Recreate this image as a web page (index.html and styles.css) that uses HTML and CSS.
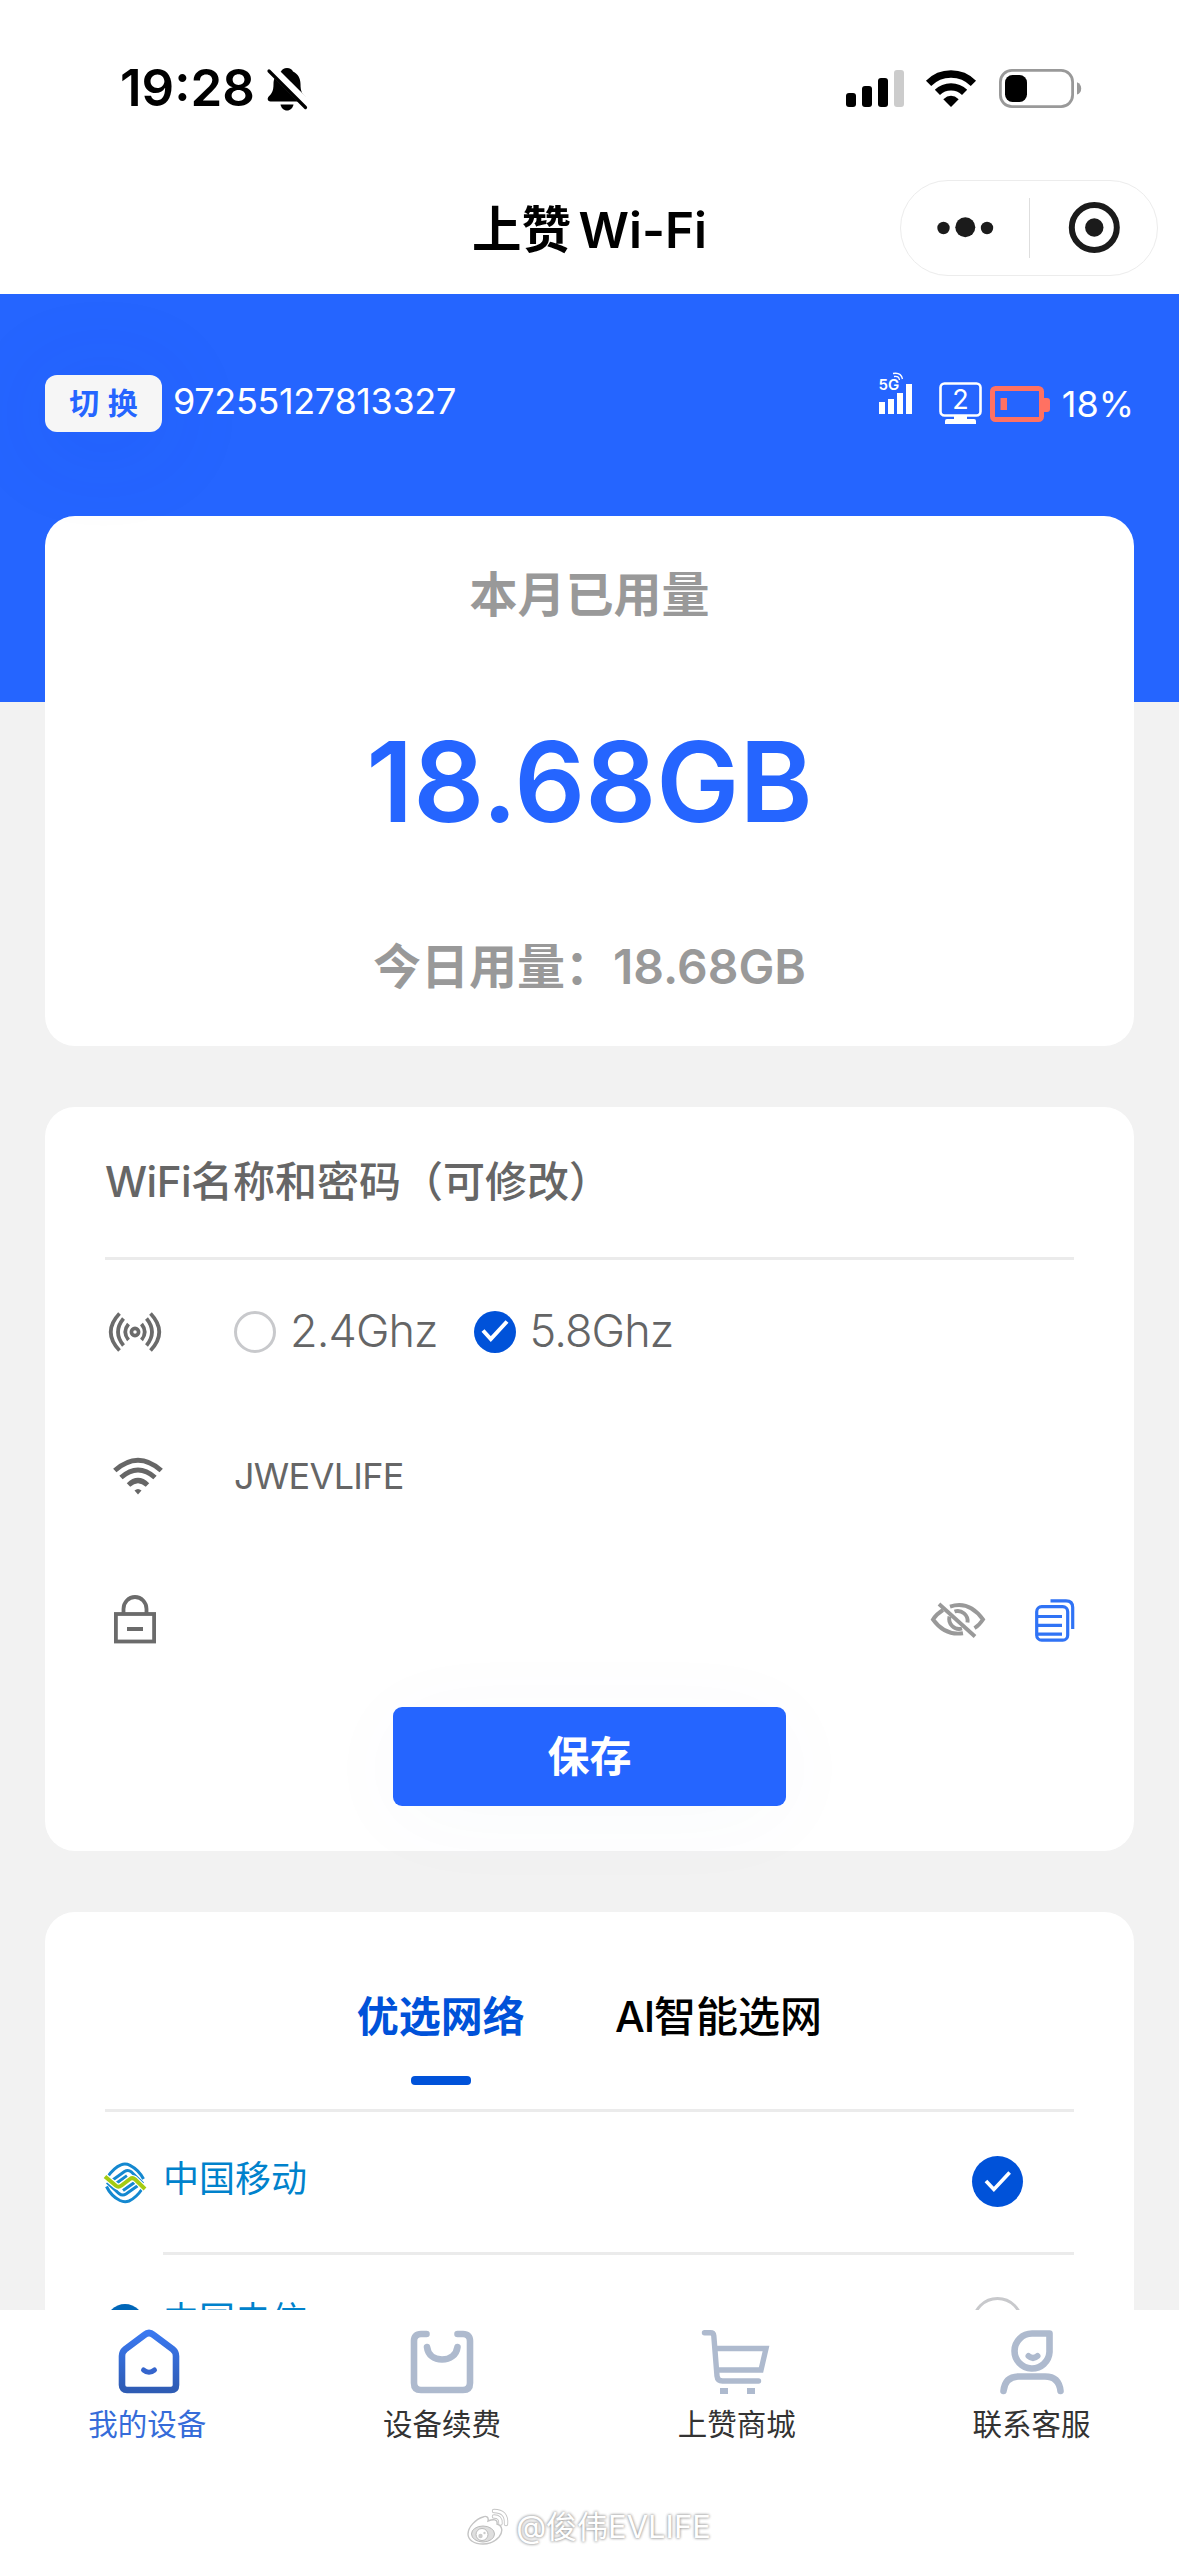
FILE: index.html
```html
<!DOCTYPE html>
<html lang="zh-CN">
<head>
<meta charset="utf-8">
<title>上赞 Wi-Fi</title>
<link rel="stylesheet" href="styles.css">
</head>
<body>
<div class="page">
  <header class="status">
    <div class="status-left">
      <span class="clock">19:28</span>
      <svg class="bell" width="40" height="44" viewBox="0 0 40 44">
        <path d="M20 1c3 0 5 1.600 6 3.400 5 2.300 7.500 7 7.500 12.600 0 8 2 10 4.500 12.500 1.600 1.700 1.500 5-1.500 5h-33c-3 0-3.500-3.300-1.800-5C4.500 26.700 6.500 24.500 6.500 17 6.500 11.400 9 6.700 14 4.400 15 2.600 17 1 20 1z"/>
        <path d="M13.500 37.500h13c-.6 3.400-3.200 6-6.500 6s-5.900-2.600-6.500-6z"/>
        <path d="M3.500 1L41 38.200" stroke="#fff" stroke-width="9"/>
        <path d="M2 4L38.500 40.500" stroke="#000" stroke-width="3.200" stroke-linecap="round"/>
      </svg>
    </div>
    <div class="status-right">
      <svg width="58" height="37" viewBox="0 0 58 37"><rect y="23" width="10" height="14" rx="3"/><rect x="16" y="16" width="10" height="21" rx="3"/><rect x="32" y="8" width="10" height="29" rx="3"/><rect x="48" width="10" height="37" rx="3" fill="#ccc"/></svg>
      <svg class="sys-wifi" width="50" height="37" viewBox="0 0 50 37"><g fill="none" stroke="#000" stroke-width="7.400"><path d="M2.600 13.300A31.500 31.500 0 0 1 47.400 13.300"/><path d="M11.400 22.400A19.500 19.500 0 0 1 38.600 22.400"/></g><path d="M17.300 29.200Q25 22.500 32.700 29.200L25 37Z"/></svg>
      <svg class="sys-battery" width="83" height="39" viewBox="0 0 83 39"><rect x="1.400" y="1.400" width="72.200" height="36.200" rx="11.500" fill="none" stroke="#999" stroke-width="2.800"/><rect x="6" y="6" width="22" height="27" rx="7.500"/><path d="M78 13.200q4.200 1.800 4.200 6.200t-4.200 6.200z" fill="#999"/></svg>
    </div>
  </header>
  <nav class="nav">
    <h1 class="nav-title">上赞 Wi-Fi</h1>
    <div class="capsule">
      <svg class="capsule-half" width="128" height="94" viewBox="0 0 128 94"><circle cx="42.500" cy="47" r="6.200"/><circle cx="64.300" cy="46.300" r="10"/><circle cx="86" cy="47" r="6.200"/></svg>
      <span class="capsule-line"></span>
      <svg class="capsule-half" width="127" height="94" viewBox="0 0 127 94"><circle cx="64.300" cy="46.500" r="22.500" fill="none" stroke="#1b1b1b" stroke-width="6"/><circle cx="64.300" cy="46.500" r="9.200"/></svg>
    </div>
  </nav>

  <main class="content">
    <section class="device">
      <button class="switch">切 换</button>
      <span class="device-id">97255127813327</span>
      <div class="device-state">
        <svg class="net" width="34" height="43" viewBox="0 0 34 43"><g fill="#fff"><rect y="30" width="6" height="12"/><rect x="9" y="27" width="6" height="15"/><rect x="18" y="21" width="6" height="21"/><rect x="27" y="12" width="6" height="30"/><text class="net-text" x="-0.500" y="18">5G</text></g><g fill="none" stroke="#fff" stroke-width="1.300"><path d="M14 1.500Q22 0 23.500 7"/><path d="M15 4.500Q20 3.500 20.500 8"/></g></svg>
        <svg class="monitor" width="44" height="43" viewBox="0 0 44 43"><rect x="1.500" y="1.500" width="40" height="32" rx="4" fill="none" stroke="#fff" stroke-width="2.600"/><path d="M15 34h13v3h7q2 0 2 2v3H6v-3q0-2 2-2h7z" fill="#fff"/><text class="monitor-text" x="21.500" y="26.500" text-anchor="middle" fill="#fff">2</text></svg>
        <svg class="cell" width="60" height="36" viewBox="0 0 60 36"><rect x="2.500" y="2.500" width="49" height="31" rx="3" fill="none" stroke="#ff7162" stroke-width="5"/><rect x="10.500" y="12" width="6.500" height="12" fill="#ff7162"/><path d="M54 12h3q3 0 3 3v8q0 3-3 3h-3z" fill="#ff7162"/></svg>
        <span class="percent">18%</span>
      </div>
    </section>

    <section class="card usage">
      <p class="usage-title">本月已用量</p>
      <p class="usage-value">18.68GB</p>
      <p class="usage-today">今日用量：<span class="today-num">18.68GB</span></p>
    </section>

    <section class="card wifi">
      <h2 class="wifi-title"><span class="latin">WiFi</span>名称和密码（可修改）</h2>
      <div class="row">
        <svg class="row-icon broadcast" width="56" height="40" viewBox="0 0 56 40" fill="none" stroke="#6b6b6b" stroke-width="3.700"><circle cx="27" cy="20" r="3.600"/><path d="M20.500 12Q14 20 20.500 28M33.500 12Q40 20 33.500 28M15.500 6.500Q4.500 20 15.500 33.500M38.500 6.500Q49.500 20 38.500 33.500M11.500 1.500Q-6 20 11.500 38.500M42.500 1.500Q60 20 42.500 38.500" stroke-linejoin="round"/></svg>
        <label class="band"><span class="radio"></span><span class="band-name">2.4Ghz</span></label>
        <label class="band"><svg class="tick" width="42" height="42" viewBox="0 0 42 42"><circle cx="21" cy="21" r="21" fill="#0052d9"/><path d="M9 19.500L16.800 28 33 10.500" fill="none" stroke="#fff" stroke-width="4"/></svg><span class="band-name">5.8Ghz</span></label>
      </div>
      <div class="row">
        <svg class="row-icon ssid-icon" width="50" height="38" viewBox="0 0 50 38" fill="none" stroke="#666" stroke-width="5"><path d="M1.800 13.500Q25-7 48.200 13.500M8 20.500Q25 5.500 42 20.500M15.500 28Q25 19 34.500 28"/><path d="M21.500 33.500q3.500-3 7 0L25 37.500z" fill="#666" stroke="none"/></svg>
        <span class="ssid">JWEVLIFE</span>
      </div>
      <div class="row">
        <svg class="row-icon lock" width="42" height="50" viewBox="0 0 42 50" fill="none" stroke="#6b6b6b" stroke-width="3.800"><rect x="1.900" y="20" width="38.200" height="27.500"/><path d="M9.500 20V15a11.500 12 0 0 1 23 0V20M13 35h16"/></svg>
        <div class="row-tools">
          <svg width="54" height="36" viewBox="0 0 54 36" fill="none" stroke="#999" stroke-width="3.900"><path d="M19 4.600Q38-1.800 52 17.500 48 23.500 43.500 26.200M12 8Q5.500 12 2 17.500 14 34 32 31.200"/><path d="M23.500 9.500A10 10 0 0 1 36.500 20.500M18.500 14.500A10 10 0 0 0 31 26.500"/><path d="M8 2L44 34.500"/></svg>
          <svg class="copy" width="40" height="43" viewBox="0 0 40 43" fill="none" stroke="#3073f5" stroke-width="3.200"><rect x="1.700" y="7.700" width="31" height="33.500" rx="5"/><path d="M3 17.500h24M3 26.300h24M3 35.100h24M15.500 1.800H31q6.700 0 6.700 6.700v21.500"/></svg>
        </div>
      </div>
      <button class="save">保存</button>
    </section>

    <section class="card networks">
      <div class="tabs">
        <span class="tab tab-active">优选网络</span>
        <span class="tab"><span class="latin-tight">AI</span>智能选网</span>
      </div>
      <ul class="carriers">
        <li class="carrier">
          <svg class="carrier-logo" width="40" height="40" viewBox="0 0 40 40" fill="none"><path d="M2.500 14Q9 4.500 16 1.800q4.500-1.600 9 .5Q34 7 38.500 16" stroke="#1488d0" stroke-width="3"/><path d="M37.500 25.500Q31 35 24 38q-4.500 1.600-9-.5Q6 33 1.500 23.500" stroke="#1488d0" stroke-width="3"/><path d="M7 17.500L19.500 8.500q3.500-2.300 7 .5L38 20.500M33 22.500L21 31q-3.500 2.300-7-.5L2 19.500" stroke="#1488d0" stroke-width="3"/><path d="M11 20.500L22 12.800M29.500 19.500L18 27.500" stroke="#1488d0" stroke-width="3.200"/><path d="M0 13.500L11 22.800q2.500 2 5.500-.3L25 16q2.500-1.800 5 .3L40 26" stroke="#fff" stroke-width="6.400"/><path d="M0 13.500L11 22.800q2.500 2 5.500-.3L25 16q2.500-1.800 5 .3L40 26" stroke="#a4cb12" stroke-width="4"/></svg>
          <div class="carrier-body"><span>中国移动</span><svg class="pick" width="51" height="51" viewBox="0 0 42 42"><circle cx="21" cy="21" r="21" fill="#0052d9"/><path d="M11.500 20.500L18 27.500 31 13.500" fill="none" stroke="#fff" stroke-width="3"/></svg></div>
        </li>
        <li class="carrier">
          <svg class="carrier-logo" width="40" height="40" viewBox="0 0 40 40"><circle cx="20" cy="19" r="19" fill="#0066b8"/><path d="M6 16q14 10 28-4-8 18-16 20z" fill="#fff"/></svg>
          <div class="carrier-body"><span>中国电信</span><span class="pick pick-empty"></span></div>
        </li>
      </ul>
    </section>
  </main>

  <footer class="tabbar">
    <div class="tabbar-items">
      <div class="item item-active">
        <svg class="home-icon" width="64" height="64" viewBox="0 0 64 64" fill="none"><defs><linearGradient id="home" x1="0" y1="0" x2="0" y2="1"><stop offset="0" stop-color="#3a78f0"/><stop offset="1" stop-color="#2f5cb4"/></linearGradient></defs><path d="M27.500 4.800q4.500-3.600 9 0L55.500 19q3.500 3 3.500 7v29q0 5-5 5H10q-5 0-5-5V26q0-4 3.500-7z" stroke="url(#home)" stroke-width="6.600"/><path d="M26.500 40q5.500 4.500 11 0" stroke="#3565cd" stroke-width="5" stroke-linecap="round"/></svg>
        <span>我的设备</span>
      </div>
      <div class="item">
        <svg width="64" height="64" viewBox="0 0 64 64" fill="none" stroke="#aebace" stroke-width="6.600" stroke-linecap="round"><path d="M16.500 4H11q-7 0-7 7v42q0 7 7 7h42q7 0 7-7V11q0-7-7-7h-5.500M17 17c1 8 7 12.500 15 12.500s14.500-4.500 15.500-12.500"/></svg>
        <span>设备续费</span>
      </div>
      <div class="item">
        <svg class="cart-icon" width="68" height="64" viewBox="0 0 68 64" fill="none" stroke="#aebace" stroke-width="5.400"><path d="M3.500 2.700h6q3 0 3.300 3L16 46q.5 5 5.500 5H57.500" stroke-linecap="round"/><path d="M14 18.500H65L60 40H16"/><path d="M19 61h8M46 61h8" stroke-width="6"/></svg>
        <span>上赞商城</span>
      </div>
      <div class="item">
        <svg width="64" height="64" viewBox="0 0 64 64" fill="none" stroke="#aebace" stroke-width="6.600" stroke-linecap="round"><path d="M32 3.500H49.500V22A17.500 17.500 0 1 1 32 3.500Z" stroke-linejoin="round"/><path d="M28.500 26q4.500 4 9 0" stroke-width="6"/><path d="M3.500 61Q5 46.500 19 46.500H45Q59 46.500 60.500 61"/></svg>
        <span>联系客服</span>
      </div>
    </div>
    <div class="watermark">
      <svg class="weibo" width="44" height="38" viewBox="0 0 44 38" fill="none"><path d="M17 9c3-1.500 6 0 5 4 5-2 10-2 9 3 6 2 6 8 2 13-4 4.500-10 7-16 7C8 36 2 32 2 26 2 19 10 11 17 9z" fill="#fff" stroke="#c4c4c4" stroke-width="1.400"/><ellipse cx="17" cy="26" rx="11.500" ry="8" fill="#dedede" stroke="#bbb"/><circle cx="16" cy="26.500" r="6" fill="#fff" stroke="#bbb"/><circle cx="14.500" cy="28" r="2.200" fill="#ccc"/><circle cx="18.500" cy="25" r="1.200" fill="#ccc"/><path d="M28 3q13 0 12 13M28 8.500q7 0 6.500 7" stroke="#c4c4c4" stroke-width="4.400" stroke-linecap="round"/><path d="M28 3q13 0 12 13M28 8.500q7 0 6.500 7" stroke="#fff" stroke-width="2.600" stroke-linecap="round"/></svg>
      <span>@俊伟EVLIFE</span>
    </div>
  </footer>
</div>
</body>
</html>
```

FILE: styles.css
```css
* {
  box-sizing: border-box;
}

body {
  margin: 0;
  background: #fff;
  font-family: Inter, "Noto Sans CJK SC", sans-serif;
}

h1, h2, p, ul {
  margin: 0;
  padding: 0;
  list-style: none;
}

button {
  border: 0;
  padding: 0;
  font-family: inherit;
}

svg {
  display: block;
  flex: none;
  overflow: visible;
}

.page {
  width: 1179px;
  height: 2556px;
  display: flex;
  flex-direction: column;
  overflow: hidden;
}

/* system status bar */
.status {
  height: 176px;
  flex: none;
  display: flex;
  align-items: center;
  justify-content: space-between;
  padding: 0 97px 0 120px;
}

.status-left,
.status-right {
  display: flex;
  align-items: center;
}

.clock {
  font-size: 51px;
  line-height: 60px;
  font-weight: 600;
}

.bell {
  margin: 1px 0 0 12px;
}

.sys-wifi {
  margin-left: 22px;
}

.sys-battery {
  margin-left: 23px;
}

/* mini-program navigation bar */
.nav {
  height: 118px;
  flex: none;
  display: grid;
  grid-template-columns: 1fr auto 1fr;
  align-items: start;
  padding: 4px 21px 0;
}

.nav-title {
  grid-column: 2;
  padding-top: 1px;
  font-size: 49.500px;
  line-height: 98px;
  font-weight: 600;
  word-spacing: -5px;
}

.capsule {
  grid-column: 3;
  justify-self: end;
  width: 258px;
  height: 96px;
  border: 1px solid #ececec;
  border-radius: 48px;
  display: flex;
  align-items: center;
  fill: #1b1b1b;
}

.capsule-line {
  width: 1px;
  height: 60px;
  background: #dedede;
}

/* scrolling area */
.content {
  height: 2016px;
  flex: none;
  overflow: hidden;
  padding: 0 45px;
  background: linear-gradient(#2565ff 408px, #f2f2f2 408px);
}

.device {
  height: 222px;
  display: flex;
  align-items: center;
  padding-bottom: 3px;
  color: #fff;
  font-size: 36px;
}

.switch {
  width: 117px;
  height: 57px;
  border-radius: 12px;
  background: #f6f6f6;
  color: #2565ff;
  font-size: 30px;
  line-height: 57px;
  font-weight: 600;
  word-spacing: 1px;
  box-shadow: 0 10px 100px rgba(0, 60, 200, 0.12);
}

.device-id {
  margin: 0 0 5px 11px;
  letter-spacing: -0.350px;
}

.device-state {
  margin-left: auto;
  display: flex;
  align-items: center;
}

.net {
  margin-bottom: 20px;
}

.net-text {
  font-size: 15px;
  font-weight: 600;
}

.monitor {
  margin-left: 26px;
}

.monitor-text {
  font-size: 27px;
}

.cell {
  margin: 0 0 0 7px;
}

.percent {
  margin-left: 12px;
}

.card {
  margin-bottom: 61px;
  border-radius: 30px;
  background: #fff;
}

/* data usage */
.usage {
  height: 530px;
  padding-top: 49px;
  text-align: center;
  color: #999;
  font-size: 48px;
  line-height: 60px;
  font-weight: 600;
}

.usage-title,
.usage-today {
  font-weight: 600;
}

.usage-value {
  margin: 97px 0 95px;
  color: #2565ff;
  font-size: 111px;
  line-height: 120px;
}

/* wifi settings */
.wifi {
  height: 744px;
  padding: 0 60px;
  color: #666;
}

.wifi-title {
  height: 153px;
  border-bottom: 3px solid #ebebeb;
  font-size: 42px;
  line-height: 150px;
  font-weight: 500;
}

.latin {
  letter-spacing: -0.500px;
}

.latin-tight {
  letter-spacing: -1px;
}

.row {
  height: 144px;
  display: flex;
  align-items: center;
}

.broadcast {
  margin: 0 70px 0 3px;
}

.ssid-icon {
  margin: 0 71px 0 8px;
}

.lock {
  margin: 0 0 2px 9px;
}

.band {
  display: flex;
  align-items: center;
  gap: 14px;
  margin-right: 36px;
  color: #646566;
  font-size: 45px;
  line-height: 60px;
  font-weight: 350;
}

.band-name {
  margin-bottom: 2px;
  letter-spacing: -0.900px;
}

.radio {
  width: 42px;
  height: 42px;
  border: 3px solid #c8c9cc;
  border-radius: 50%;
}

.ssid {
  font-size: 36px;
  letter-spacing: -0.700px;
}

.row-tools {
  margin: 0 -1px 0 auto;
  display: flex;
  align-items: center;
  gap: 50px;
}

.save {
  display: block;
  width: 393px;
  height: 99px;
  margin: 15px auto 0;
  border-radius: 9px;
  background: #2565ff;
  color: #fff;
  font-size: 42px;
  line-height: 99px;
  font-weight: 600;
  box-shadow: 0 12px 100px rgba(0, 80, 160, 0.03);
}

/* network choice */
.networks {
  padding: 75px 60px 0;
}

.tabs {
  height: 125px;
  border-bottom: 3px solid #ebebeb;
  display: flex;
  justify-content: center;
  gap: 90px;
}

.tab {
  font-size: 42px;
  line-height: 60px;
  font-weight: 500;
}

.tab-active {
  color: #0052d9;
  font-weight: 600;
}

.tab-active::after {
  content: "";
  display: block;
  width: 60px;
  height: 9px;
  margin: 29px auto 0;
  border-radius: 4px;
  background: #0052d9;
}

.carrier {
  height: 141px;
  display: flex;
  align-items: center;
}

.carrier-logo {
  margin-right: 18px;
}

.carrier-body {
  flex: 1;
  height: 143px;
  margin-bottom: -2px;
  border-bottom: 3px solid #ebebeb;
  display: flex;
  align-items: center;
  justify-content: space-between;
  padding: 0 51px 2px 0;
  color: #0082cc;
  font-size: 36px;
  line-height: 50px;
}

.carrier-body > span:first-child {
  margin-bottom: 4px;
}

.pick-empty {
  width: 51px;
  height: 51px;
  border: 3px solid #c8c9cc;
  border-radius: 50%;
}

/* bottom tab bar */
.tabbar {
  height: 246px;
  flex: none;
  padding-top: 20px;
  background: #fff;
}

.tabbar-items {
  display: grid;
  grid-template-columns: repeat(4, 1fr);
}

.item {
  display: flex;
  flex-direction: column;
  align-items: center;
  gap: 10px;
  color: #333;
  font-size: 29.500px;
  line-height: 40px;
}

.item-active {
  color: #366cd9;
}

.home-icon {
  margin-left: 3px;
}

.cart-icon {
  margin-right: 4px;
}

.watermark {
  display: flex;
  align-items: center;
  justify-content: center;
  gap: 6px;
  margin: 63px 2px 0 0;
  color: #fff;
  font-size: 31px;
  line-height: 40px;
  text-shadow: 0 0 3px #999, 0 0 3px #aaa;
}
```
